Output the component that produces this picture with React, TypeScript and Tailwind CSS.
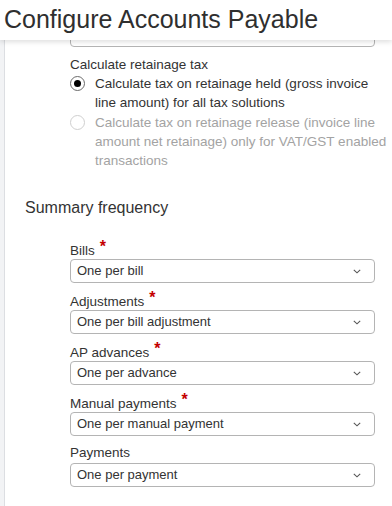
const font = { fontFamily: '"Liberation Sans", Arial, sans-serif' }

const fields = [
  { label: 'Bills', value: 'One per bill', required: true },
  { label: 'Adjustments', value: 'One per bill adjustment', required: true },
  { label: 'AP advances', value: 'One per advance', required: true },
  { label: 'Manual payments', value: 'One per manual payment', required: true },
  { label: 'Payments', value: 'One per payment', required: false },
]

function Chevron() {
  return (
    <svg width="8" height="5" viewBox="0 0 8 5" className="shrink-0">
      <path d="M0.8 0.8 L4 3.8 L7.2 0.8" fill="none" stroke="#555" strokeWidth="1.1" />
    </svg>
  )
}

function SelectBox({ value }: { value?: string }) {
  return (
    <div className="flex items-center justify-between w-[305px] h-[24px] rounded-[4px] border border-[#b4b4b4] bg-white pl-[6px] pr-[13px] text-[13px] text-[#333]">
      <span className="leading-[22px]">{value}</span>
      <Chevron />
    </div>
  )
}

function Radio({ checked, disabled, lines }: { checked?: boolean; disabled?: boolean; lines: string[] }) {
  return (
    <div className="flex items-start">
      <span
        className={`mt-[2px] flex items-center justify-center w-[15px] h-[15px] rounded-full border shrink-0 bg-white ${
          disabled ? 'border-[#cfcfcf]' : 'border-[#6b6b6b]'
        }`}
      >
        {checked && <span className="w-[7px] h-[7px] rounded-full bg-black" />}
      </span>
      <span className={`ml-[10px] whitespace-nowrap leading-[19px] ${disabled ? 'text-[#a3a3a3]' : 'text-[#333]'}`}>
        {lines.map((l, i) => (
          <span key={i} className="block">
            {l}
          </span>
        ))}
      </span>
    </div>
  )
}

export default function App() {
  return (
    <div className="relative w-[392px] h-[506px] overflow-hidden bg-white" style={font}>
      {/* page header floats over the scrolled form */}
      <div className="absolute top-0 inset-x-0 z-10 h-[40px] bg-white pl-[4px] shadow-[0_2px_5px_rgba(0,0,0,0.13)]">
        <h1 className="text-[25px] leading-[39px] text-[#2f2f2f]">Configure Accounts Payable</h1>
      </div>

      <div className="h-full bg-[#f2f3f5] pl-[4px]">
        <div className="h-full bg-white border-l border-[#dcdee2] pt-[23px]">
          <div className="pl-[65px]">
            <SelectBox />
            <div className="mt-[8px] text-[13.5px] leading-[19px] text-[#333]">Calculate retainage tax</div>
            <div className="text-[13.5px]">
              <Radio
                checked
                lines={['Calculate tax on retainage held (gross invoice', 'line amount) for all tax solutions']}
              />
              <div className="mt-[1px]">
                <Radio
                  disabled
                  lines={[
                    'Calculate tax on retainage release (invoice line',
                    'amount net retainage) only for VAT/GST enabled',
                    'transactions',
                  ]}
                />
              </div>
            </div>
          </div>

          <div className="pl-[20px] mt-[28px] text-[16px] leading-[20px] text-[#333]">Summary frequency</div>

          <div className="pl-[65px] mt-[21px] flex flex-col gap-[7px]">
            {fields.map((f) => (
              <div key={f.label}>
                <div className="h-[19px] mb-[1px] text-[13.5px] leading-[19px] text-[#333]">
                  {f.label}
                  {f.required && <span className="ml-[5px] text-[16px] font-bold text-[#c40000] align-[3px] leading-none">*</span>}
                </div>
                <SelectBox value={f.value} />
              </div>
            ))}
          </div>
        </div>
      </div>
    </div>
  )
}
